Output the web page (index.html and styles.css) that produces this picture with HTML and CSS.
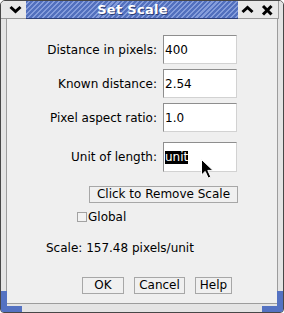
FILE: index.html
```html
<!DOCTYPE html>
<html>
<head>
<meta charset="utf-8">
<link rel="stylesheet" href="styles.css">
</head>
<body>
<div class="window">
  <div class="titlebar">
    <div class="tb-left">
      <svg width="25" height="17" viewBox="0 0 25 17"><polyline points="9.5,6 14.5,10.5 19.5,6" fill="none" stroke="#000" stroke-width="3"/></svg>
    </div>
    <div class="tb-title"><span>Set Scale</span></div>
    <div class="tb-right">
      <svg width="40" height="17" viewBox="0 0 40 17">
        <polyline points="4.5,11 9.5,6.5 14.5,11" fill="none" stroke="#000" stroke-width="3"/>
        <line x1="25" y1="5" x2="33.5" y2="13.5" stroke="#000" stroke-width="3"/>
        <line x1="33.5" y1="5" x2="25" y2="13.5" stroke="#000" stroke-width="3"/>
      </svg>
    </div>
    <div class="tb-edge"></div>
  </div>
  <div class="body">
    <div class="rows">
      <div class="row"><label class="lbl">Distance in pixels:</label><div class="field">400</div></div>
      <div class="row"><label class="lbl">Known distance:</label><div class="field">2.54</div></div>
      <div class="row"><label class="lbl">Pixel aspect ratio:</label><div class="field">1.0</div></div>
      <div class="row row-unit"><label class="lbl">Unit of length:</label><div class="field"><span class="sel">unit</span></div></div>
    </div>
    <div class="remove-row"><div class="btn btn-remove">Click to Remove Scale</div></div>
    <div class="check-row"><span class="checkbox"></span><span>Global</span></div>
    <div class="scale-text">Scale: 157.48 pixels/unit</div>
    <div class="btn-row">
      <div class="btn btn-ok">OK</div>
      <div class="btn btn-cancel">Cancel</div>
      <div class="btn btn-help">Help</div>
    </div>
  </div>
  <div class="grip grip-lv"></div>
  <div class="grip grip-lh"></div>
  <div class="grip grip-rv"></div>
  <div class="grip grip-rh"></div>
  <svg class="cursor" width="15" height="22" viewBox="0 0 15 22"><path d="M1.5 1.5 V17 L5.2 13.4 L8.2 20 L10.8 18.9 L7.8 12.4 H13 Z" fill="#000" stroke="#fff" stroke-width="1" stroke-linejoin="miter"/></svg>
</div>
</body>
</html>
```
FILE: styles.css
```css
html, body {
  margin: 0;
  padding: 0;
  background: #ffffff;
}
body {
  font-family: "DejaVu Sans", sans-serif;
  font-size: 12px;
  color: #000;
}
.window {
  position: relative;
  width: 284px;
  height: 313px;
  box-sizing: border-box;
  border: 1px solid #474747;
  border-radius: 5px 5px 4px 4px;
  background: #e4e4e4;
  display: flex;
  flex-direction: column;
  overflow: hidden;
}
.titlebar {
  display: flex;
  height: 18px;
  flex: none;
}
.tb-left {
  width: 25px;
  height: 17px;
  background: #e8e8e8;
  border-bottom: 1px solid #9a9a9a;
}
.tb-left svg, .tb-right svg { display: block; }
.tb-title {
  flex: 1;
  height: 17px;
  border-bottom: 1px solid #2d3f78;
  background-color: #5b78c4;
  background-image: repeating-linear-gradient(135deg, #5270be 0px, #5270be 2px, #859ddb 2px, #859ddb 3.5px);
  display: flex;
  align-items: center;
  justify-content: center;
}
.tb-title span {
  font-weight: bold;
  font-size: 13px;
  color: #ffffff;
  line-height: 15px;
  letter-spacing: 0.3px;
  text-shadow: 1px 1px 0 #2c3d74;
  margin-left: 1px;
}
.tb-right {
  width: 40px;
  height: 17px;
  background: #e8e8e8;
  border-bottom: 1px solid #9a9a9a;
}
.tb-edge {
  width: 5px;
  height: 18px;
  background: #e4e4e4;
  border-left: 1px solid #9c9c9c;
  box-sizing: border-box;
}
.body {
  flex: 1;
  margin: 0 5px 8px 5px;
  border: 1px solid #9c9c9c;
  border-top: 0;
  background: #efefef;
  padding-top: 16px;
}
.rows {
  display: flex;
  flex-direction: column;
  gap: 5px;
}
.row {
  display: flex;
  align-items: center;
  height: 29px;
}
.row-unit {
  margin-top: 5px;
  height: 30px;
}
.lbl {
  width: 150px;
  text-align: right;
  margin-right: 6px;
  line-height: 14px;
}
.field {
  width: 74px;
  height: 100%;
  box-sizing: border-box;
  background: #ffffff;
  border: 1px solid;
  border-color: #8e8e8e #d2d2d2 #d2d2d2 #8e8e8e;
  padding-left: 1px;
  display: flex;
  align-items: center;
  line-height: 14px;
}
.sel {
  background: #000;
  color: #fff;
  line-height: 13px;
  display: inline-block;
}
.btn {
  height: 17px;
  box-sizing: border-box;
  border: 1px solid #a7a7a7;
  background: #f0f0f0;
  line-height: 15px;
  text-align: center;
}
.remove-row {
  margin-top: 14px;
  padding-left: 82px;
  display: flex;
}
.btn-remove { width: 149px; }
.check-row {
  margin-top: 7px;
  padding-left: 70px;
  height: 14px;
  line-height: 14px;
  display: flex;
  align-items: center;
  gap: 1px;
}
.checkbox {
  width: 10px;
  height: 10px;
  box-sizing: border-box;
  border: 1px solid #a2a2a2;
  background: #f2f2f2;
}
.scale-text {
  margin-top: 17px;
  padding-left: 39px;
  line-height: 14px;
}
.btn-row {
  margin-top: 22px;
  padding-left: 75px;
  display: flex;
  gap: 10px;
}
.btn-ok { width: 42px; }
.btn-cancel { width: 51px; }
.btn-help { width: 37px; }
.grip {
  position: absolute;
  background: #5472c2;
}
.grip-lv { left: 0; bottom: 0; width: 6px; height: 21px; }
.grip-lh { left: 0; bottom: 0; width: 21px; height: 6px; }
.grip-rv { right: 0; bottom: 0; width: 6px; height: 21px; }
.grip-rh { right: 0; bottom: 0; width: 21px; height: 6px; }
.cursor {
  position: absolute;
  left: 199px;
  top: 157px;
}
```
